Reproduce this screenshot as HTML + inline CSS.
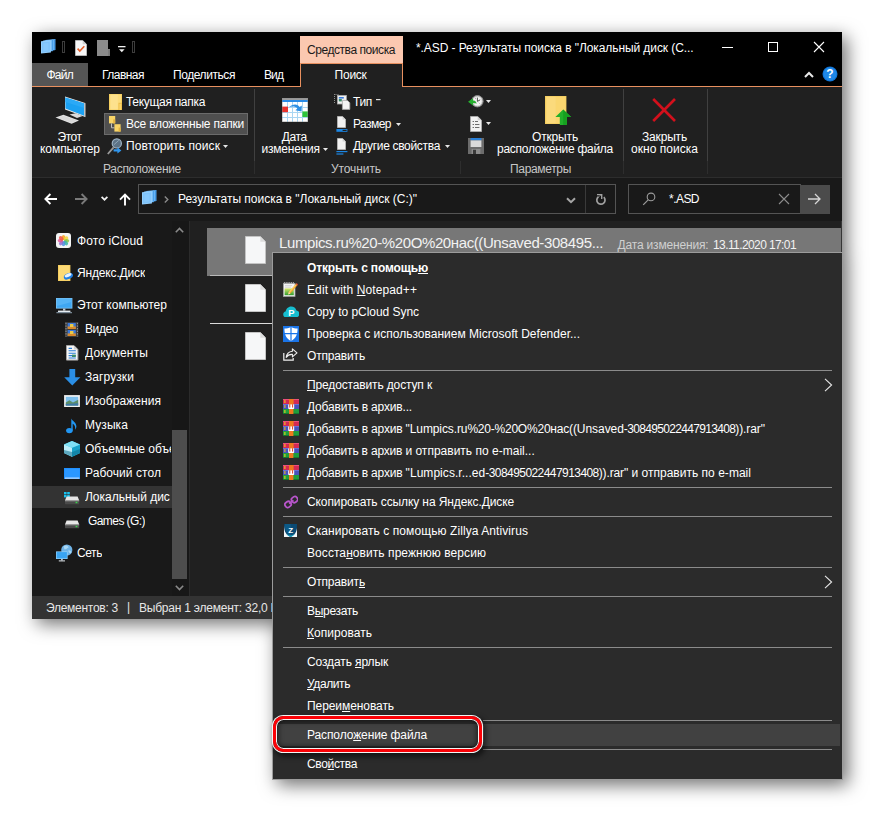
<!DOCTYPE html>
<html lang="ru"><head><meta charset="utf-8"><title>*.ASD - Результаты поиска</title>
<style>
html,body{margin:0;padding:0}
body{width:875px;height:813px;position:relative;overflow:hidden;background:#fff;font-family:'Liberation Sans', sans-serif;font-size:12px}
body>div,body>span,body>svg{position:absolute}
span{white-space:pre}
u{text-decoration:underline;text-underline-offset:1px}
b{font-weight:700}
</style></head>
<body>
<div style="left:0;top:0;width:875px;height:813px;filter:drop-shadow(5px 5px 9px rgba(0,0,0,.56));"><div style="position:absolute;left:32px;top:32px;width:810px;height:587px;background:#191919"></div><div style="position:absolute;left:272px;top:252px;width:571px;height:528px;background:#2b2b2b"></div></div>
<div style="left:32px;top:32px;width:810px;height:55px;background:#000;"></div>
<div style="left:32px;top:63px;width:56px;height:23px;background:#555;"></div>
<div style="left:300px;top:36px;width:103px;height:27px;background:#fbc8b0;"></div>
<div style="left:32px;top:86px;width:810px;height:1px;background:#e8905f;"></div>
<div style="left:32px;top:87px;width:810px;height:91px;background:#202020;"></div>
<div style="left:300px;top:63px;width:103px;height:24px;background:#202020;border:1px solid #e8905f;border-bottom:none;box-sizing:border-box;"></div>
<div style="left:32px;top:177px;width:810px;height:1px;background:#2d2d2d;"></div>
<div style="left:254px;top:89px;width:1px;height:72px;background:#404040;"></div>
<div style="left:254px;top:161px;width:1px;height:13px;background:#2e2e2e;"></div>
<div style="left:460px;top:161px;width:1px;height:13px;background:#2e2e2e;"></div>
<div style="left:623px;top:89px;width:1px;height:72px;background:#404040;"></div>
<div style="left:623px;top:161px;width:1px;height:13px;background:#2e2e2e;"></div>
<div style="left:707px;top:89px;width:1px;height:72px;background:#404040;"></div>
<div style="left:707px;top:161px;width:1px;height:13px;background:#2e2e2e;"></div>
<div style="left:104px;top:113px;width:144px;height:22px;background:#4f4f4f;box-sizing:border-box;border:1px solid #6b6b6b;"></div>
<div style="left:32px;top:178px;width:810px;height:43px;background:#191919;"></div>
<div style="left:138px;top:184px;width:478px;height:30px;background:#191919;box-sizing:border-box;border:1px solid #545454;"></div>
<div style="left:585px;top:185px;width:1px;height:28px;background:#3a3a3a;"></div>
<div style="left:628px;top:184px;width:173px;height:30px;background:#191919;box-sizing:border-box;border:1px solid #545454;"></div>
<div style="left:800px;top:184.5px;width:30px;height:29px;background:#4b4b4b;"></div>
<div style="left:32px;top:221px;width:140px;height:375px;background:#191919;"></div>
<div style="left:172px;top:221px;width:17px;height:375px;background:#171717;"></div>
<div style="left:189px;top:221px;width:1px;height:375px;background:#2b2b2b;"></div>
<div style="left:190px;top:221px;width:652px;height:375px;background:#202020;"></div>
<div style="left:172px;top:430px;width:15px;height:149px;background:#4d4d4d;"></div>
<div style="left:32px;top:486px;width:140px;height:22px;background:#333;"></div>
<div style="left:206.5px;top:227.5px;width:634.5px;height:48px;background:#777;"></div>
<div style="left:841px;top:221px;width:1px;height:375px;background:#363636;"></div>
<div style="left:210px;top:275px;width:70px;height:1px;background:#b9b9b9;"></div>
<div style="left:210px;top:323px;width:70px;height:1.2px;background:#dadada;"></div>
<div style="left:32px;top:596px;width:810px;height:23px;background:#333;"></div>
<span style="left:416.00px;top:40.00px;font-size:12px;line-height:16px;color:#fff;letter-spacing:-0.081px;">*.ASD - Результаты поиска в "Локальный диск (C...</span>
<span style="left:307.00px;top:42.00px;font-size:12px;line-height:16px;color:#1a1a1a;letter-spacing:-0.438px;">Средства поиска</span>
<span style="left:46.40px;top:67.00px;font-size:12px;line-height:16px;color:#fff;letter-spacing:-0.754px;">Файл</span>
<span style="left:102.00px;top:67.00px;font-size:12px;line-height:16px;color:#fff;letter-spacing:-0.527px;">Главная</span>
<span style="left:173.00px;top:67.00px;font-size:12px;line-height:16px;color:#fff;letter-spacing:-0.427px;">Поделиться</span>
<span style="left:264.00px;top:67.00px;font-size:12px;line-height:16px;color:#fff;letter-spacing:-0.906px;">Вид</span>
<span style="left:334.60px;top:67.00px;font-size:12px;line-height:16px;color:#fff;letter-spacing:-0.253px;">Поиск</span>
<span style="left:57.60px;top:128.50px;font-size:12px;line-height:16px;color:#fff;letter-spacing:-0.527px;">Этот</span>
<span style="left:40.00px;top:141.00px;font-size:12px;line-height:16px;color:#fff;letter-spacing:-0.057px;">компьютер</span>
<span style="left:126.00px;top:94.00px;font-size:12px;line-height:16px;color:#fff;letter-spacing:-0.304px;">Текущая папка</span>
<span style="left:126.00px;top:116.00px;font-size:12px;line-height:16px;color:#fff;letter-spacing:-0.211px;">Все вложенные папки</span>
<span style="left:126.00px;top:138.00px;font-size:12px;line-height:16px;color:#fff;letter-spacing:0.065px;">Повторить поиск</span>
<span style="left:103.00px;top:161.00px;font-size:12px;line-height:16px;color:#c6c6c6;letter-spacing:-0.298px;">Расположение</span>
<span style="left:281.80px;top:128.50px;font-size:12px;line-height:16px;color:#fff;letter-spacing:-0.395px;">Дата</span>
<span style="left:261.60px;top:141.00px;font-size:12px;line-height:16px;color:#fff;letter-spacing:-0.230px;">изменения</span>
<span style="left:353.00px;top:94.00px;font-size:12px;line-height:16px;color:#fff;letter-spacing:-0.339px;">Тип</span>
<span style="left:353.00px;top:116.00px;font-size:12px;line-height:16px;color:#fff;letter-spacing:-0.542px;">Размер</span>
<span style="left:353.00px;top:138.00px;font-size:12px;line-height:16px;color:#fff;letter-spacing:-0.319px;">Другие свойства</span>
<span style="left:331.00px;top:161.00px;font-size:12px;line-height:16px;color:#c6c6c6;letter-spacing:-0.092px;">Уточнить</span>
<span style="left:532.00px;top:128.50px;font-size:12px;line-height:16px;color:#fff;letter-spacing:-0.163px;">Открыть</span>
<span style="left:497.00px;top:141.00px;font-size:12px;line-height:16px;color:#fff;letter-spacing:-0.273px;">расположение файла</span>
<span style="left:510.00px;top:161.00px;font-size:12px;line-height:16px;color:#c6c6c6;letter-spacing:-0.330px;">Параметры</span>
<span style="left:642.00px;top:128.50px;font-size:12px;line-height:16px;color:#fff;letter-spacing:-0.174px;">Закрыть</span>
<span style="left:631.00px;top:141.00px;font-size:12px;line-height:16px;color:#fff;letter-spacing:0.034px;">окно поиска</span>
<span style="left:178.00px;top:191.00px;font-size:12px;line-height:16px;color:#fff;letter-spacing:-0.018px;">Результаты поиска в "Локальный диск (C:)"</span>
<span style="left:669.00px;top:191.00px;font-size:12px;line-height:16px;color:#fff;letter-spacing:-0.537px;">*.ASD</span>
<span style="left:77.00px;top:232.50px;font-size:12px;line-height:16px;color:#fff;letter-spacing:0.098px;max-width:94px;overflow:hidden;">Фото iCloud</span>
<span style="left:77.00px;top:265.00px;font-size:12px;line-height:16px;color:#fff;letter-spacing:-0.162px;max-width:94px;overflow:hidden;">Яндекс.Диск</span>
<span style="left:77.00px;top:297.00px;font-size:12px;line-height:16px;color:#fff;letter-spacing:0.019px;max-width:94px;overflow:hidden;">Этот компьютер</span>
<span style="left:85.00px;top:321.00px;font-size:12px;line-height:16px;color:#fff;letter-spacing:-0.412px;max-width:86px;overflow:hidden;">Видео</span>
<span style="left:85.00px;top:345.00px;font-size:12px;line-height:16px;color:#fff;letter-spacing:0.127px;max-width:86px;overflow:hidden;">Документы</span>
<span style="left:85.00px;top:369.00px;font-size:12px;line-height:16px;color:#fff;letter-spacing:0.088px;max-width:86px;overflow:hidden;">Загрузки</span>
<span style="left:85.00px;top:393.00px;font-size:12px;line-height:16px;color:#fff;letter-spacing:0.053px;max-width:86px;overflow:hidden;">Изображения</span>
<span style="left:85.00px;top:417.00px;font-size:12px;line-height:16px;color:#fff;letter-spacing:0.091px;max-width:86px;overflow:hidden;">Музыка</span>
<span style="left:85.00px;top:441.00px;font-size:12px;line-height:16px;color:#fff;letter-spacing:-0.021px;max-width:86px;overflow:hidden;">Объемные объекты</span>
<span style="left:85.00px;top:465.00px;font-size:12px;line-height:16px;color:#fff;letter-spacing:0.056px;max-width:86px;overflow:hidden;">Рабочий стол</span>
<span style="left:85.00px;top:489.00px;font-size:12px;line-height:16px;color:#fff;letter-spacing:-0.014px;max-width:86px;overflow:hidden;">Локальный дис</span>
<span style="left:88.00px;top:513.00px;font-size:12px;line-height:16px;color:#fff;letter-spacing:-0.567px;max-width:83px;overflow:hidden;">Games (G:)</span>
<span style="left:77.00px;top:545.00px;font-size:12px;line-height:16px;color:#fff;letter-spacing:-0.426px;max-width:94px;overflow:hidden;">Сеть</span>
<span style="left:279.00px;top:232.50px;font-size:15px;line-height:20px;color:#f2f2f2;letter-spacing:-0.395px;">Lumpics.ru%20-%20О%20нас((Unsaved-308495...</span>
<span style="left:617.50px;top:237.00px;font-size:12px;line-height:16px;color:#d0d0d0;letter-spacing:-0.167px;">Дата изменения:</span>
<span style="left:713.00px;top:237.00px;font-size:12px;line-height:16px;color:#f2f2f2;letter-spacing:-0.596px;">13.11.2020 17:01</span>
<span style="left:46.00px;top:599.50px;font-size:12px;line-height:16px;color:#e6e6e6;letter-spacing:-0.268px;">Элементов: 3</span>
<span style="left:127.00px;top:598.50px;font-size:12px;line-height:16px;color:#e6e6e6;">|</span>
<span style="left:139.00px;top:599.50px;font-size:12px;line-height:16px;color:#e6e6e6;letter-spacing:-0.225px;">Выбран 1 элемент: 32,0 КБ</span>
<svg style="left:40.5px;top:38.8px;" width="15" height="15" viewBox="0 0 15 15"><path d="M4.4 0.9 L14.3 0.1 V11 L4.4 12.2Z" fill="#6cb6f5"/><path d="M13.1 0.2 L14.3 0.1 V11 L13.1 11.15Z" fill="#3f95e4"/><path d="M2.2 1.5 L12.1 0.7 V12 L2.2 13.2Z" fill="#7cc0f8"/><path d="M10.9 0.8 L12.1 0.7 V12 L10.9 12.15Z" fill="#4a9fe9"/><path d="M0 2.2 L9.9 1.3 V13.5 L0 14.6Z" fill="#93cffd"/><path d="M1 3.3 L8.9 2.5 V12.6 L1 13.5Z" fill="#7fc3fa"/><path d="M2.4 4.6 L7.4 4.1 V11.4 L2.4 12Z" fill="#8acafc" opacity=".7"/></svg>
<div style="left:62px;top:41px;width:2px;height:12px;border:1px solid #3d3d3d;box-sizing:border-box;width:3px"></div>
<svg style="left:75px;top:40px;" width="12" height="16" viewBox="0 0 12 16"><path d="M0.5 0.5 H7.699999999999999 L11.5 4.3 V15.5 H0.5Z" fill="#f7f7f7" stroke="#b5b5b5" stroke-width="1"/><path d="M7.699999999999999 0.5 V4.3 H11.5Z" fill="#d0d0d0"/><path d="M2.6 8.6 L4.8 11 L9.3 6.2" fill="none" stroke="#e8622c" stroke-width="1.6"/></svg>
<svg style="left:97px;top:40px;" width="13" height="16" viewBox="0 0 13 16"><path d="M0 0H11V9H13V16H0Z" fill="#8b8b8b"/><path d="M11.3 9.6H13V16H11.3Z" fill="#777"/></svg>
<svg style="left:118px;top:46px;" width="8" height="7" viewBox="0 0 8 7"><rect x="0" y="0" width="7.5" height="1.3" fill="#f0f0f0"/><path d="M1 3.2H6.6L3.8 6.2Z" fill="#f0f0f0"/></svg>
<div style="left:132px;top:41px;width:3px;height:12px;border:1px solid #3d3d3d;box-sizing:border-box"></div>
<div style="left:722px;top:47px;width:11px;height:1px;background:#fff"></div>
<div style="left:768px;top:42px;width:10px;height:10px;border:1px solid #fff;box-sizing:border-box"></div>
<svg style="left:813px;top:41px;" width="12" height="12" viewBox="0 0 12 12"><path d="M1 1L11 11M11 1L1 11" stroke="#fff" stroke-width="1.1" fill="none"/></svg>
<svg style="left:804px;top:71px;" width="10" height="7" viewBox="0 0 10 7"><path d="M1 6L5 2L9 6" stroke="#e8e8e8" stroke-width="2" fill="none"/></svg>
<svg style="left:822px;top:66px;" width="16" height="16" viewBox="0 0 16 16"><circle cx="8" cy="8" r="7.5" fill="#1173d4"/><circle cx="8" cy="8" r="6.5" fill="#1e88e8"/><text x="8" y="12.3" font-family="Liberation Sans, sans-serif" font-weight="700" font-size="12" fill="#fff" text-anchor="middle">?</text></svg>
<svg style="left:55px;top:96px;" width="31" height="29" viewBox="0 0 31 29"><path d="M10 0.6 L30.2 7 V21 L10 13.6Z" fill="#e9e9e9"/><path d="M10.4 1.6 L29.2 7.4 V19.8 L10.4 12.6Z" fill="#1ba1f2"/><path d="M10.4 1.6 L29.2 7.4 V12 L10.4 6Z" fill="#2aa9f6"/><path d="M29.2 7 L30.4 7.2 V21.3 L29.2 20.6Z" fill="#bdbdbd"/><path d="M14.5 18.6 L20.5 17.2 L27.6 20 L22 22Z" fill="#dcdcdc"/><path d="M0.5 21.6 L8.4 18.8 L24 24.4 L16.6 27.8Z" fill="#e4e4e4"/><path d="M2.5 21.7 L8.3 19.7 L21.8 24.5 L16.5 26.8Z" fill="#cfcfcf" opacity=".55"/></svg>
<svg style="left:109px;top:94px;" width="13" height="16" viewBox="0 0 13 16"><rect x="0" y="0" width="13" height="16" fill="#f6cf60"/><rect x="1" y="0.6" width="11" height="14.8" fill="#fcdc7c"/><rect x="1.6" y="0.6" width="7.2" height="14.8" fill="#fde18d"/><rect x="9.5" y="8.8" width="3.5" height="7.2" fill="#e9b945"/><rect x="10.3" y="9.6" width="2" height="6.4" fill="#fbd56a"/></svg>
<svg style="left:109px;top:116px;" width="12" height="16" viewBox="0 0 12 16"><rect x="0" y="0" width="6.2" height="7.4" fill="#f8d467"/><rect x="4.2" y="3.4" width="2" height="4" fill="#e4b340"/><path d="M2.5 7.4V11.8H5.5" stroke="#bdbdbd" stroke-width="1" fill="none"/><rect x="5.4" y="8.2" width="6.2" height="7.4" fill="#f8d467"/><rect x="9.6" y="11.6" width="2" height="4" fill="#e4b340"/></svg>
<svg style="left:107px;top:138px;" width="15" height="17" viewBox="0 0 15 17"><path d="M0.8 16L6.6 9.4" stroke="#9a9a9a" stroke-width="1.8"/><circle cx="9.8" cy="5.4" r="4.6" fill="#5d7386" stroke="#9fb3c4" stroke-width="1.2"/><path d="M6.8 6.8L11.8 2.4" stroke="#8fa6b8" stroke-width="1"/><path d="M6.6 11.2H10.4V9.2L14.4 12.4L10.4 15.6V13.6H6.6Z" fill="#2f96ee"/></svg>
<svg style="left:223px;top:145px;" width="5" height="3" viewBox="0 0 5 3"><path d="M0 0H5L2.5 3Z" fill="#e6e6e6"/></svg>
<svg style="left:282px;top:98px;" width="26" height="24" viewBox="0 0 26 24"><rect x="0" y="0" width="26" height="24" fill="#fff"/><rect x="0" y="0" width="26" height="2" fill="#9b9b9b"/><rect x="0" y="2" width="26" height="2" fill="#2a8be6"/><path d="M0 9.5H26M0 14.5H26M0 19.5H26M5.5 4V24M10.5 4V24M15.5 4V24M20.5 4V24" stroke="#a9d6f2" stroke-width="1"/><rect x="0" y="8.6" width="6" height="5.6" fill="#e8332c"/><rect x="20.4" y="13.4" width="5.6" height="5.6" fill="#2fc33a"/><path d="M7 9.2 C10.5 5.6 15.8 5.6 17.6 9 L19.8 7.4 L19.6 13.4 L13.4 12.2 L15.4 10.6 C13.8 8.4 10 8.2 7 9.2Z" fill="#2e8fe4"/><rect x="0" y="0" width="26" height="24" fill="none" stroke="#8d8d8d" stroke-width="0.8"/></svg>
<svg style="left:323px;top:148px;" width="5" height="3" viewBox="0 0 5 3"><path d="M0 0H5L2.5 3Z" fill="#e6e6e6"/></svg>
<svg style="left:334px;top:94px;" width="17" height="16" viewBox="0 0 17 16"><path d="M0.5 0V9" stroke="#8c8c8c" stroke-width="1" stroke-dasharray="1 1"/><path d="M0.5 0.5H5" stroke="#8c8c8c" stroke-width="1" stroke-dasharray="1 1"/><rect x="3.4" y="1.4" width="9" height="8.6" fill="#f2f2f2" stroke="#a8a8a8" stroke-width=".8"/><rect x="4.8" y="3" width="5" height="1.6" fill="#3b7ddd"/><rect x="4.8" y="5" width="3" height="2.4" fill="#3c8a6a"/><path d="M8.4 6.4H13.4L15.8 8.8V15.4H8.4Z" fill="#f4f4f4" stroke="#a8a8a8" stroke-width=".8"/></svg>
<svg style="left:376px;top:99px;" width="5" height="2" viewBox="0 0 5 2"><rect width="4.5" height="1.2" fill="#e0e0e0"/></svg>
<svg style="left:336px;top:116px;" width="12" height="17" viewBox="-1 0 12 17"><path d="M0.5 0.5 H5.6 L8.5 3.4 V11.5 H0.5Z" fill="#f1f1f1" stroke="#b0b0b0" stroke-width="1"/><path d="M5.6 0.5 V3.4 H8.5Z" fill="#cfcfcf"/><rect x="-0.6" y="13" width="11" height="2.8" fill="#1b86e4"/><rect x="5.6" y="13.8" width="4" height="1.2" fill="#202020"/></svg>
<svg style="left:396px;top:123px;" width="5" height="3" viewBox="0 0 5 3"><path d="M0 0H5L2.5 3Z" fill="#e6e6e6"/></svg>
<svg style="left:336px;top:138px;" width="12" height="17" viewBox="-1 0 12 17"><path d="M0.5 0.5 H5.6 L8.5 3.4 V11.5 H0.5Z" fill="#f1f1f1" stroke="#b0b0b0" stroke-width="1"/><path d="M5.6 0.5 V3.4 H8.5Z" fill="#cfcfcf"/><rect x="-0.6" y="13" width="11" height="1.2" fill="#1b86e4"/><rect x="-0.6" y="15.4" width="7" height="1.2" fill="#1b86e4"/></svg>
<svg style="left:445px;top:145px;" width="5" height="3" viewBox="0 0 5 3"><path d="M0 0H5L2.5 3Z" fill="#e6e6e6"/></svg>
<svg style="left:468px;top:93px;" width="16" height="16" viewBox="0 0 16 16"><circle cx="9.4" cy="8.2" r="5.7" fill="#cfcfcf" stroke="#8a8a8a" stroke-width="1"/><circle cx="9.4" cy="8.2" r="4.2" fill="#f4f4f4"/><path d="M9.4 4.6V8.4L12.2 6.8" stroke="#505050" stroke-width="1" fill="none"/><path d="M7 5.2L8 6M6.4 10.4L7.4 9.8M11.6 10.6L10.8 9.8" stroke="#888" stroke-width=".7"/><path d="M0 8.8L5 5.2V7.4C7.2 7.2 8.4 8.4 8.6 10.8C7.4 9.8 6.4 9.8 5 10.2V12.4Z" fill="#27ae30"/></svg>
<svg style="left:486px;top:100px;" width="5" height="3" viewBox="0 0 5 3"><path d="M0 0H5L2.5 3Z" fill="#e6e6e6"/></svg>
<svg style="left:470px;top:116px;" width="12" height="16" viewBox="0 0 12 16"><path d="M0.5 0.5 H7.699999999999999 L11.5 4.3 V15.5 H0.5Z" fill="#f2f2f2" stroke="#a9a9a9" stroke-width="1"/><path d="M7.699999999999999 0.5 V4.3 H11.5Z" fill="#cfcfcf"/><path d="M2.6 5.5H4M5 5.5H8M2.6 8.5H4M5 8.5H9.4M2.6 11.5H4M5 11.5H9.4" stroke="#6d6d6d" stroke-width="1.1"/></svg>
<svg style="left:486px;top:122px;" width="5" height="3" viewBox="0 0 5 3"><path d="M0 0H5L2.5 3Z" fill="#e6e6e6"/></svg>
<svg style="left:468px;top:138px;" width="16" height="16" viewBox="0 0 16 16"><path d="M0 0H16V16H0Z" fill="#6c6c6c"/><rect x="2.6" y="0" width="10.8" height="2.4" fill="#2a7fd6"/><rect x="2.6" y="2.4" width="10.8" height="6.6" fill="#dadada"/><rect x="3.6" y="11" width="8.8" height="5" fill="#8d8d8d"/><rect x="5" y="11.8" width="3" height="4.2" fill="#3a3a3a"/></svg>
<svg style="left:545px;top:96px;" width="27" height="29" viewBox="0 0 27 29"><rect x="0" y="0" width="21.4" height="28" fill="#f3cc5e"/><rect x="1" y="0.8" width="19.6" height="26.4" fill="#fad66f"/><rect x="1.6" y="0.8" width="9" height="26.4" fill="#fbda7c"/><path d="M18.2 13.4L26.2 21H21.8V29H14.8V21H10.4Z" fill="#21b02a"/><path d="M18.2 13.4L26.2 21H21.8V29H18.2Z" fill="#16a020"/></svg>
<svg style="left:651px;top:97px;" width="26" height="26" viewBox="0 0 26 26"><path d="M2.2 2L24 24M24 2L2.2 24" stroke="#d3101c" stroke-width="2.6" fill="none"/></svg>
<svg style="left:44px;top:193px;" width="14" height="12" viewBox="0 0 14 12"><path d="M13 6H1.8M6.4 1L1.4 6L6.4 11" stroke="#fff" stroke-width="1.9" fill="none"/></svg>
<svg style="left:74px;top:193px;" width="14" height="12" viewBox="0 0 14 12"><path d="M1 6H12.2M7.6 1L12.6 6L7.6 11" stroke="#7a7a7a" stroke-width="1.9" fill="none"/></svg>
<svg style="left:101px;top:196px;" width="7" height="5" viewBox="0 0 7 5"><path d="M0.6 0.8L3.5 3.7L6.4 0.8" stroke="#f2f2f2" stroke-width="1.7" fill="none"/></svg>
<svg style="left:119px;top:193px;" width="12" height="13" viewBox="0 0 12 13"><path d="M6 12.6V1.8M1 6.6L6 1.6L11 6.6" stroke="#fff" stroke-width="1.9" fill="none"/></svg>
<svg style="left:142px;top:189.6px;" width="15" height="15" viewBox="0 0 15 15"><path d="M4.4 0.9 L14.3 0.1 V11 L4.4 12.2Z" fill="#6cb6f5"/><path d="M13.1 0.2 L14.3 0.1 V11 L13.1 11.15Z" fill="#3f95e4"/><path d="M2.2 1.5 L12.1 0.7 V12 L2.2 13.2Z" fill="#7cc0f8"/><path d="M10.9 0.8 L12.1 0.7 V12 L10.9 12.15Z" fill="#4a9fe9"/><path d="M0 2.2 L9.9 1.3 V13.5 L0 14.6Z" fill="#93cffd"/><path d="M1 3.3 L8.9 2.5 V12.6 L1 13.5Z" fill="#7fc3fa"/><path d="M2.4 4.6 L7.4 4.1 V11.4 L2.4 12Z" fill="#8acafc" opacity=".7"/></svg>
<svg style="left:164px;top:196px;" width="5" height="7" viewBox="0 0 5 7"><path d="M0.8 0.6L3.8 3.5L0.8 6.4" stroke="#8a8a8a" stroke-width="1.4" fill="none"/></svg>
<svg style="left:566px;top:197px;" width="10" height="7" viewBox="0 0 10 7"><path d="M1 1.2L5 5.2L9 1.2" stroke="#a6a6a6" stroke-width="2" fill="none"/></svg>
<svg style="left:595px;top:193px;" width="12" height="13" viewBox="0 0 12 13"><path d="M8.8 4.2A4.1 4.1 0 1 1 3.5 3.8" stroke="#a0a0a0" stroke-width="1.7" fill="none"/><path d="M2 1.6H6.7V6" stroke="#a0a0a0" stroke-width="1.4" fill="none"/><path d="M3.4 3.9L6.4 1.8" stroke="#a0a0a0" stroke-width="1" fill="none" opacity=".6"/></svg>
<svg style="left:642px;top:192px;" width="14" height="14" viewBox="0 0 14 14"><circle cx="9" cy="4.9" r="3.8" stroke="#9c9c9c" stroke-width="1.1" fill="none"/><path d="M6.4 7.6L1.2 12.9" stroke="#9c9c9c" stroke-width="1.2"/></svg>
<svg style="left:778px;top:193px;" width="12" height="12" viewBox="0 0 12 12"><path d="M1 1L11 11M11 1L1 11" stroke="#8c8c8c" stroke-width="1.1" fill="none"/></svg>
<svg style="left:807px;top:193px;" width="15" height="12" viewBox="0 0 15 12"><path d="M1 6H13M8 1L13 6L8 11" stroke="#d6d6d6" stroke-width="1.3" fill="none"/></svg>
<svg style="left:175px;top:227px;" width="9" height="6" viewBox="0 0 9 6"><path d="M0.8 5.2L4.5 1.5L8.2 5.2" stroke="#8a8a8a" stroke-width="1.6" fill="none"/></svg>
<svg style="left:175.3px;top:585px;" width="9" height="6" viewBox="0 0 9 6"><path d="M0.8 0.8L4.5 4.5L8.2 0.8" stroke="#8a8a8a" stroke-width="1.6" fill="none"/></svg>
<svg style="left:56px;top:233px;" width="15" height="15" viewBox="0 0 15 15"><rect x="0" y="0" width="15" height="15" rx="3" fill="#f4f4f4"/><ellipse cx="7.5" cy="4.6" rx="1.9" ry="2.6" fill="#f6a623" opacity=".9"/><ellipse cx="10" cy="5.6" rx="1.9" ry="2.6" transform="rotate(45 10 5.6)" fill="#f2d43a" opacity=".85"/><ellipse cx="10.6" cy="7.8" rx="2.6" ry="1.9" fill="#8cc63f" opacity=".85"/><ellipse cx="9.8" cy="10" rx="1.9" ry="2.6" transform="rotate(-45 9.8 10)" fill="#37b6a5" opacity=".85"/><ellipse cx="7.5" cy="10.6" rx="1.9" ry="2.6" fill="#4a90e2" opacity=".85"/><ellipse cx="5.2" cy="10" rx="1.9" ry="2.6" transform="rotate(45 5.2 10)" fill="#8e6fd1" opacity=".85"/><ellipse cx="4.4" cy="7.6" rx="2.6" ry="1.9" fill="#e2589a" opacity=".85"/><ellipse cx="5.2" cy="5.4" rx="1.9" ry="2.6" transform="rotate(-45 5.2 5.4)" fill="#ef5b4c" opacity=".9"/></svg>
<svg style="left:58px;top:265px;" width="16" height="16" viewBox="0 0 16 16"><rect x="0" y="0" width="12.4" height="16" fill="#f4cb5a"/><rect x="0.8" y="0.6" width="10.8" height="14.8" fill="#fcda76"/><ellipse cx="10.4" cy="11.2" rx="4.8" ry="2.9" transform="rotate(-24 10.4 11.2)" fill="#1f7fe6"/><ellipse cx="10.1" cy="10.2" rx="3.6" ry="1.6" transform="rotate(-24 10.1 10.2)" fill="#e9f3ff"/></svg>
<svg style="left:56px;top:298px;" width="17" height="16" viewBox="0 0 17 16"><rect x="0" y="0" width="16.4" height="10.6" fill="#7ec6f7"/><rect x="0.8" y="0.8" width="14.8" height="9" fill="#3fa7f2"/><path d="M0.8 0.8H15.6V4L0.8 8Z" fill="#55b4f6"/><rect x="7" y="10.6" width="2.4" height="2" fill="#bfc9d2"/><rect x="2" y="12.6" width="12.4" height="1.4" fill="#e6ecf1"/><rect x="0.4" y="14.2" width="15.6" height="1" fill="#8fa3b3"/></svg>
<svg style="left:65px;top:322px;" width="14" height="15" viewBox="0 0 14 15"><rect x="0" y="0" width="13.4" height="15" fill="#3c3c3c"/><path d="M1 0.8V14.4M12.4 0.8V14.4" stroke="#9a9a9a" stroke-width="1" stroke-dasharray="1.4 1.2"/><rect x="2.6" y="1" width="8.2" height="6" fill="#3b78d8"/><rect x="2.6" y="4.4" width="8.2" height="2.6" fill="#d98a2b"/><rect x="5" y="2" width="3.4" height="3" fill="#e8c94a"/><rect x="2.6" y="8" width="8.2" height="6" fill="#3b78d8"/><rect x="2.6" y="11.4" width="8.2" height="2.6" fill="#d98a2b"/><rect x="5" y="9" width="3.4" height="3" fill="#e8c94a"/></svg>
<svg style="left:66px;top:345px;" width="13" height="16" viewBox="0 0 13 16"><path d="M0.5 0.5 H7.9 L11.9 4.5 V15.1 H0.5Z" fill="#f7f7f7" stroke="#a5a5a5" stroke-width="1"/><path d="M7.9 0.5 V4.5 H11.9Z" fill="#cfcfcf"/><path d="M2.6 3.4H6M2.6 5.8H9.8M2.6 8.2H9.8M2.6 10.6H9.8M2.6 13H9.8" stroke="#2b7fd8" stroke-width="1.1"/><rect x="6" y="9.6" width="3.8" height="2.4" fill="#3d8f6e"/></svg>
<svg style="left:64px;top:369px;" width="17" height="17" viewBox="0 0 17 17"><path d="M5.4 0H11.2V8.2H16.4L8.3 16.4L0.2 8.2H5.4Z" fill="#2b8fe6"/></svg>
<svg style="left:64px;top:394.5px;" width="16" height="12.6" viewBox="0 0 16 12.6"><rect x="0" y="0" width="16" height="12.4" fill="#f2f2f2" stroke="#bdbdbd" stroke-width=".8"/><rect x="1.8" y="1.8" width="12.4" height="8.8" fill="#7fc1ee"/><path d="M1.8 7.4L5.4 5.2L9 7.6L14.2 4.8V10.6H1.8Z" fill="#5c8f6b"/><path d="M1.8 9L14.2 8.2V10.6H1.8Z" fill="#3e78a8"/></svg>
<svg style="left:66px;top:417.5px;" width="11.4" height="16" viewBox="0 0 11.4 16"><ellipse cx="3.4" cy="12.6" rx="3.3" ry="2.7" fill="#2196f3"/><path d="M5.3 12.6V0.4C6.2 3 10.6 4.2 10.4 8.6C10.3 10 9.8 11 9 11.8C9.8 8.4 8 6.4 6.7 5.8V12.6Z" fill="#2196f3"/></svg>
<svg style="left:64px;top:441px;" width="16" height="16" viewBox="0 0 16 16"><path d="M8 0L16 3.4V12L8 15.8L0 12V3.4Z" fill="#35c6e8"/><path d="M0 3.4L8 6.8V15.8L0 12Z" fill="#bdeefa"/><path d="M8 6.8L16 3.4V12L8 15.8Z" fill="#1aa3c9"/><path d="M8 0L16 3.4L8 6.8L0 3.4Z" fill="#7fe0f5"/><path d="M8 11L16 8V12L8 15.8L0 12V9Z" fill="#0e6f8e" opacity=".55"/></svg>
<svg style="left:64px;top:467.5px;" width="16.4" height="11.4" viewBox="0 0 16.4 11.4"><rect x="0" y="0" width="16.4" height="11.4" fill="#1e8fff"/><rect x="0.8" y="0.8" width="14.8" height="8.4" fill="#2b97ff"/><rect x="1" y="9.6" width="14.4" height="1" fill="#e8f2ff"/></svg>
<svg style="left:64px;top:491.6px;" width="16" height="13" viewBox="0 0 16 13"><rect x="0" y="0" width="2.6" height="2.4" fill="#19c3f0"/><rect x="3.2" y="0" width="2.6" height="2.4" fill="#19c3f0"/><rect x="0" y="3" width="2.6" height="2.4" fill="#19c3f0"/><rect x="3.2" y="3" width="2.6" height="2.4" fill="#19c3f0"/><path d="M2.6 4.6H13.6L15.2 8.6H1Z" fill="#e6e6e6"/><rect x="1" y="8.6" width="14.2" height="3.6" rx=".6" fill="#4a4a4a"/><rect x="1" y="8.4" width="14.2" height="0.8" fill="#bcbcbc"/><rect x="11.6" y="9.8" width="1.8" height="1.4" fill="#37d64a"/></svg>
<svg style="left:64px;top:515.8px;" width="16" height="13" viewBox="0 0 16 13"><path d="M2.6 4.6H13.6L15.2 8.6H1Z" fill="#e6e6e6"/><rect x="1" y="8.6" width="14.2" height="3.6" rx=".6" fill="#4a4a4a"/><rect x="1" y="8.4" width="14.2" height="0.8" fill="#bcbcbc"/><rect x="11.6" y="9.8" width="1.8" height="1.4" fill="#37d64a"/></svg>
<svg style="left:56px;top:544px;" width="17" height="18" viewBox="0 0 17 18"><circle cx="10.8" cy="6" r="5.6" fill="#6fb3e6"/><path d="M7.6 2.6C9 1 12 1.4 12.6 3.4C11 4 10 5.6 8.4 5.2Z" fill="#a9d7f4"/><path d="M12.4 6.4C14 6 15.6 7.4 15.4 9C14 9.6 12.4 8.6 12.4 6.4Z" fill="#a9d7f4"/><rect x="0" y="7.4" width="11.6" height="7.6" fill="#8fd0fa"/><rect x="0.7" y="8.1" width="10.2" height="6.2" fill="#39a4f2"/><rect x="5" y="15" width="1.8" height="1.4" fill="#b8c4cf"/><rect x="2.8" y="16.4" width="6.2" height="1" fill="#dfe6ec"/></svg>
<svg style="left:245px;top:236px;" width="21" height="28" viewBox="0 0 21 28"><path d="M0.5 0.5 H15.3 L20.5 5.7 V27.5 H0.5Z" fill="#f6f7f8" stroke="#c4c4c4" stroke-width="1"/><path d="M15.3 0.5 V5.7 H20.5Z" fill="#dcdcdc"/></svg>
<svg style="left:245px;top:284px;" width="21" height="28" viewBox="0 0 21 28"><path d="M0.5 0.5 H15.3 L20.5 5.7 V27.5 H0.5Z" fill="#f6f7f8" stroke="#c4c4c4" stroke-width="1"/><path d="M15.3 0.5 V5.7 H20.5Z" fill="#dcdcdc"/></svg>
<svg style="left:245px;top:332px;" width="21" height="28" viewBox="0 0 21 28"><path d="M0.5 0.5 H15.3 L20.5 5.7 V27.5 H0.5Z" fill="#f6f7f8" stroke="#c4c4c4" stroke-width="1"/><path d="M15.3 0.5 V5.7 H20.5Z" fill="#dcdcdc"/></svg>
<div style="left:272px;top:252px;width:571px;height:528px;background:#2b2b2b;box-sizing:border-box;border:1px solid #9c9c9c;"></div><div style="left:283px;top:370px;width:549px;height:1px;background:#8b8b8b;"></div><div style="left:283px;top:487px;width:549px;height:1px;background:#8b8b8b;"></div><div style="left:283px;top:516px;width:549px;height:1px;background:#8b8b8b;"></div><div style="left:283px;top:567px;width:549px;height:1px;background:#8b8b8b;"></div><div style="left:283px;top:596px;width:549px;height:1px;background:#8b8b8b;"></div><div style="left:283px;top:647px;width:549px;height:1px;background:#8b8b8b;"></div><div style="left:483px;top:720px;width:349px;height:1px;background:#8b8b8b;"></div><div style="left:483px;top:749px;width:349px;height:1px;background:#8b8b8b;"></div><div style="left:275px;top:724px;width:565px;height:22px;background:#414141;"></div>
<span style="left:307.00px;top:260.00px;font-size:12px;line-height:16px;color:#fff;letter-spacing:-0.154px;"><b>Открыть с помощь<u>ю</u></b></span>
<span style="left:307.00px;top:282.00px;font-size:12px;line-height:16px;color:#fff;letter-spacing:0.101px;">Edit with <u>N</u>otepad++</span>
<span style="left:307.00px;top:304.00px;font-size:12px;line-height:16px;color:#fff;letter-spacing:-0.039px;">Copy to pCloud Sync</span>
<span style="left:307.00px;top:326.00px;font-size:12px;line-height:16px;color:#fff;letter-spacing:0.010px;">Проверка с использованием Microsoft Defender...</span>
<span style="left:307.00px;top:348.00px;font-size:12px;line-height:16px;color:#fff;letter-spacing:-0.168px;">Отправить</span>
<span style="left:307.00px;top:377.00px;font-size:12px;line-height:16px;color:#fff;letter-spacing:-0.141px;"><u>П</u>редоставить доступ к</span>
<span style="left:307.00px;top:399.00px;font-size:12px;line-height:16px;color:#fff;letter-spacing:-0.178px;">Добавить в архив...</span>
<span style="left:307.00px;top:494.00px;font-size:12px;line-height:16px;color:#fff;letter-spacing:-0.105px;">Скопировать ссылку на Яндекс.Диске</span>
<span style="left:307.00px;top:523.00px;font-size:12px;line-height:16px;color:#fff;letter-spacing:0.083px;">Сканировать с помощью Zillya Antivirus</span>
<span style="left:307.00px;top:545.00px;font-size:12px;line-height:16px;color:#fff;letter-spacing:0.067px;">Восста<u>н</u>овить прежнюю версию</span>
<span style="left:307.00px;top:574.00px;font-size:12px;line-height:16px;color:#fff;letter-spacing:-0.168px;">Отправит<u>ь</u></span>
<span style="left:307.00px;top:603.00px;font-size:12px;line-height:16px;color:#fff;letter-spacing:-0.299px;">В<u>ы</u>резать</span>
<span style="left:307.00px;top:625.00px;font-size:12px;line-height:16px;color:#fff;letter-spacing:0.037px;"><u>К</u>опировать</span>
<span style="left:307.00px;top:654.00px;font-size:12px;line-height:16px;color:#fff;letter-spacing:-0.121px;">Создать <u>я</u>рлык</span>
<span style="left:307.00px;top:676.00px;font-size:12px;line-height:16px;color:#fff;letter-spacing:-0.404px;"><u>У</u>далить</span>
<span style="left:307.00px;top:698.00px;font-size:12px;line-height:16px;color:#fff;letter-spacing:-0.076px;">Переи<u>м</u>еновать</span>
<span style="left:307.00px;top:727.00px;font-size:12px;line-height:16px;color:#fff;letter-spacing:-0.102px;">Располо<u>ж</u>ение файла</span>
<span style="left:307.00px;top:756.00px;font-size:12px;line-height:16px;color:#fff;letter-spacing:-0.340px;">Сво<u>й</u>ства</span>
<span style="left:307.00px;top:421.00px;font-size:12px;line-height:16px;color:#fff;letter-spacing:-0.183px;">Добавить в архив </span>
<span style="left:405.60px;top:421.00px;font-size:12px;line-height:16px;color:#fff;letter-spacing:-0.105px;">"Lumpics.ru</span>
<span style="left:467.40px;top:421.00px;font-size:12px;line-height:16px;color:#fff;letter-spacing:-0.221px;">%20-%20О%20нас</span>
<span style="left:569.00px;top:421.00px;font-size:12px;line-height:16px;color:#fff;letter-spacing:-0.062px;">((Unsaved</span>
<span style="left:623.80px;top:421.00px;font-size:12px;line-height:16px;color:#fff;letter-spacing:-0.664px;">-308495022447913408</span>
<span style="left:735.30px;top:421.00px;font-size:12px;line-height:16px;color:#fff;letter-spacing:-0.095px;">)).rar"</span>
<span style="left:307.00px;top:443.00px;font-size:12px;line-height:16px;color:#fff;letter-spacing:-0.194px;">Добавить в архив </span>
<span style="left:405.40px;top:443.00px;font-size:12px;line-height:16px;color:#fff;letter-spacing:0.011px;">и отправить по e-mail...</span>
<span style="left:307.00px;top:465.00px;font-size:12px;line-height:16px;color:#fff;letter-spacing:-0.183px;">Добавить в архив </span>
<span style="left:405.60px;top:465.00px;font-size:12px;line-height:16px;color:#fff;letter-spacing:0.049px;">"Lumpics.r...ed</span>
<span style="left:485.30px;top:465.00px;font-size:12px;line-height:16px;color:#fff;letter-spacing:-0.564px;">-308495022447913408</span>
<span style="left:598.70px;top:465.00px;font-size:12px;line-height:16px;color:#fff;letter-spacing:-0.112px;">)).rar" </span>
<span style="left:631.40px;top:465.00px;font-size:12px;line-height:16px;color:#fff;letter-spacing:0.022px;">и отправить по e-mail</span>
<svg style="left:283px;top:282px;" width="15.6" height="15" viewBox="0 0 15.6 15"><defs><linearGradient id="npg" x1="0" y1="0" x2="0" y2="1"><stop offset="0" stop-color="#d9e86a"/><stop offset="1" stop-color="#2f9a2f"/></linearGradient></defs><rect x="0.4" y="1.4" width="11.6" height="13" fill="#f4f4f4" stroke="#a2a2a2" stroke-width=".8"/><path d="M1.4 1.2V0.2M3.2 1.2V0.2M5 1.2V0.2M6.8 1.2V0.2M8.6 1.2V0.2M10.4 1.2V0.2" stroke="#d8d8d8" stroke-width=".9"/><path d="M2 3.6H9M2 5.2H8" stroke="#c9c9c9" stroke-width=".7"/><rect x="1.6" y="6.4" width="9.2" height="6.8" fill="url(#npg)"/><path d="M13.6 1.2L15 2.6L7.4 11.4L5.2 12.4L5.8 10Z" fill="#f4a62a"/><path d="M13.6 1.2L15 2.6L14 3.7L12.6 2.3Z" fill="#c2262f"/><path d="M13 1.9L13.7 2.6L6.6 10.7L5.8 10Z" fill="#fbd36a"/><path d="M5.8 10L7.4 11.4L5.2 12.4Z" fill="#f7e4b8"/></svg>
<svg style="left:282.8px;top:305.6px;" width="16.6" height="11.6" viewBox="0 0 16.6 11.6"><path d="M3.4 11.4C1.4 11.4 0.2 10 0.2 8.4C0.2 7 1.2 5.8 2.6 5.6C3 2.8 5.2 0.4 8.2 0.4C10.8 0.4 12.8 2 13.4 4.4C15.2 4.6 16.4 6 16.4 7.8C16.4 9.8 14.8 11.4 13 11.4Z" fill="#17bed0"/><text x="8.3" y="9.9" font-family="Liberation Sans, sans-serif" font-weight="700" font-size="9.4" fill="#fff" text-anchor="middle">P</text></svg>
<svg style="left:283px;top:326px;" width="16" height="16" viewBox="0 0 16 16"><rect x="0" y="0" width="16" height="16" fill="#1a74e8"/><path d="M8 1C5.8 2.2 3.6 2.6 1.4 2.6C1.4 8.4 3 12.4 8 15.2C13 12.4 14.6 8.4 14.6 2.6C12.4 2.6 10.2 2.2 8 1Z" fill="#fff"/><path d="M8 0.6V15.6M1 7.6H15" stroke="#1a74e8" stroke-width="1.2"/></svg>
<svg style="left:283px;top:348px;" width="15" height="13.4" viewBox="0 0 15 13.4"><path d="M0.8 5V12.2H10.2V10" stroke="#f0f0f0" stroke-width="1.2" fill="none"/><path d="M9.4 0.8L14 4.8L9.4 8.8V6.4C6.6 6.2 4.6 7.2 3.2 9.4C3.6 5.8 5.8 3.6 9.4 3.2Z" stroke="#f0f0f0" stroke-width="1.1" fill="none" stroke-linejoin="round"/></svg>
<svg style="left:283px;top:399px;" width="16.4" height="15" viewBox="0 0 16.4 15"><rect x="0" y="0" width="16.4" height="5" fill="#d42a55"/><rect x="0" y="0" width="16.4" height="1" fill="#ec4f7c"/><rect x="0" y="5" width="16.4" height="5" fill="#4852bd"/><rect x="0" y="5" width="16.4" height="1" fill="#6570d8"/><rect x="0" y="10" width="16.4" height="5" fill="#1f9e3d"/><rect x="0" y="14.2" width="16.4" height="0.8" fill="#13702a"/><rect x="1.4" y="1" width="1" height="3" fill="#f5d21c"/><rect x="1.4" y="6" width="1" height="3" fill="#f5c21c"/><rect x="1.4" y="11" width="1" height="3" fill="#f5d21c"/><rect x="6" y="0" width="4.4" height="15" fill="#f0781f"/><rect x="5.2" y="5.2" width="6" height="4.8" rx=".8" fill="#fff"/><path d="M6.8 5.2V8.6M9.6 5.2V8.6" stroke="#d8200f" stroke-width=".9"/><rect x="6" y="0" width="4.4" height="5.2" fill="#f0781f"/></svg>
<svg style="left:283px;top:421px;" width="16.4" height="15" viewBox="0 0 16.4 15"><rect x="0" y="0" width="16.4" height="5" fill="#d42a55"/><rect x="0" y="0" width="16.4" height="1" fill="#ec4f7c"/><rect x="0" y="5" width="16.4" height="5" fill="#4852bd"/><rect x="0" y="5" width="16.4" height="1" fill="#6570d8"/><rect x="0" y="10" width="16.4" height="5" fill="#1f9e3d"/><rect x="0" y="14.2" width="16.4" height="0.8" fill="#13702a"/><rect x="1.4" y="1" width="1" height="3" fill="#f5d21c"/><rect x="1.4" y="6" width="1" height="3" fill="#f5c21c"/><rect x="1.4" y="11" width="1" height="3" fill="#f5d21c"/><rect x="6" y="0" width="4.4" height="15" fill="#f0781f"/><rect x="5.2" y="5.2" width="6" height="4.8" rx=".8" fill="#fff"/><path d="M6.8 5.2V8.6M9.6 5.2V8.6" stroke="#d8200f" stroke-width=".9"/><rect x="6" y="0" width="4.4" height="5.2" fill="#f0781f"/></svg>
<svg style="left:283px;top:443px;" width="16.4" height="15" viewBox="0 0 16.4 15"><rect x="0" y="0" width="16.4" height="5" fill="#d42a55"/><rect x="0" y="0" width="16.4" height="1" fill="#ec4f7c"/><rect x="0" y="5" width="16.4" height="5" fill="#4852bd"/><rect x="0" y="5" width="16.4" height="1" fill="#6570d8"/><rect x="0" y="10" width="16.4" height="5" fill="#1f9e3d"/><rect x="0" y="14.2" width="16.4" height="0.8" fill="#13702a"/><rect x="1.4" y="1" width="1" height="3" fill="#f5d21c"/><rect x="1.4" y="6" width="1" height="3" fill="#f5c21c"/><rect x="1.4" y="11" width="1" height="3" fill="#f5d21c"/><rect x="6" y="0" width="4.4" height="15" fill="#f0781f"/><rect x="5.2" y="5.2" width="6" height="4.8" rx=".8" fill="#fff"/><path d="M6.8 5.2V8.6M9.6 5.2V8.6" stroke="#d8200f" stroke-width=".9"/><rect x="6" y="0" width="4.4" height="5.2" fill="#f0781f"/></svg>
<svg style="left:283px;top:465px;" width="16.4" height="15" viewBox="0 0 16.4 15"><rect x="0" y="0" width="16.4" height="5" fill="#d42a55"/><rect x="0" y="0" width="16.4" height="1" fill="#ec4f7c"/><rect x="0" y="5" width="16.4" height="5" fill="#4852bd"/><rect x="0" y="5" width="16.4" height="1" fill="#6570d8"/><rect x="0" y="10" width="16.4" height="5" fill="#1f9e3d"/><rect x="0" y="14.2" width="16.4" height="0.8" fill="#13702a"/><rect x="1.4" y="1" width="1" height="3" fill="#f5d21c"/><rect x="1.4" y="6" width="1" height="3" fill="#f5c21c"/><rect x="1.4" y="11" width="1" height="3" fill="#f5d21c"/><rect x="6" y="0" width="4.4" height="15" fill="#f0781f"/><rect x="5.2" y="5.2" width="6" height="4.8" rx=".8" fill="#fff"/><path d="M6.8 5.2V8.6M9.6 5.2V8.6" stroke="#d8200f" stroke-width=".9"/><rect x="6" y="0" width="4.4" height="5.2" fill="#f0781f"/></svg>
<svg style="left:283.6px;top:495px;" width="14.6" height="14" viewBox="0 0 14.6 14"><g transform="rotate(-37 7.3 7)" fill="none" stroke="#b855cb" stroke-width="1.8"><rect x="0.2" y="4.3" width="6" height="5.4" rx="2.2"/><rect x="8.4" y="4.3" width="6" height="5.4" rx="2.2"/><path d="M4.6 7H10" stroke-width="1.8"/></g></svg>
<svg style="left:283.8px;top:524px;" width="13.2" height="13.2" viewBox="0 0 13.2 13.2"><rect x="0" y="0" width="13.2" height="13.2" fill="#f4f8fa"/><path d="M0 0H13.2C13.2 6.4 12 10.4 6.6 13C1.2 10.4 0 6.4 0 0Z" fill="#0b3f66"/><path d="M0.8 0H12.4C12.4 5.8 11.4 9.6 6.6 12C1.8 9.6 0.8 5.8 0.8 0Z" fill="#0d5a86"/><path d="M6.6 0H12.4C12.4 5.8 11.4 9.6 6.6 12Z" fill="#0b4a74"/><path d="M2 9.4C3 11 4.6 12 6.6 13C8.6 12 10.2 11 11.2 9.4C9.6 10.6 8.2 11.2 6.6 11.4C5 11.2 3.6 10.6 2 9.4Z" fill="#1aa6c4"/><text x="6.6" y="8.8" font-family="Liberation Sans, sans-serif" font-weight="700" font-size="8" fill="#fff" text-anchor="middle">Z</text></svg>
<svg style="left:824px;top:378px;" width="9" height="14" viewBox="0 0 9 14"><path d="M1 0.8L7.6 7L1 13.2" stroke="#e6e6e6" stroke-width="1.1" fill="none"/></svg>
<svg style="left:824px;top:575px;" width="9" height="14" viewBox="0 0 9 14"><path d="M1 0.8L7.6 7L1 13.2" stroke="#e6e6e6" stroke-width="1.1" fill="none"/></svg>
<div style="left:272.9px;top:715.8px;width:209.3px;height:36.6px;box-sizing:border-box;border:3.3px solid #fb0207;border-radius:10.5px;box-shadow:0 0 0 1.1px #f4f4f4,2px 3px 5px 1.5px rgba(0,0,0,.5),inset 0 0 0 1px #f4f4f4,inset 0 0 5px 2.5px rgba(0,0,0,.5);"></div>
</body></html>
